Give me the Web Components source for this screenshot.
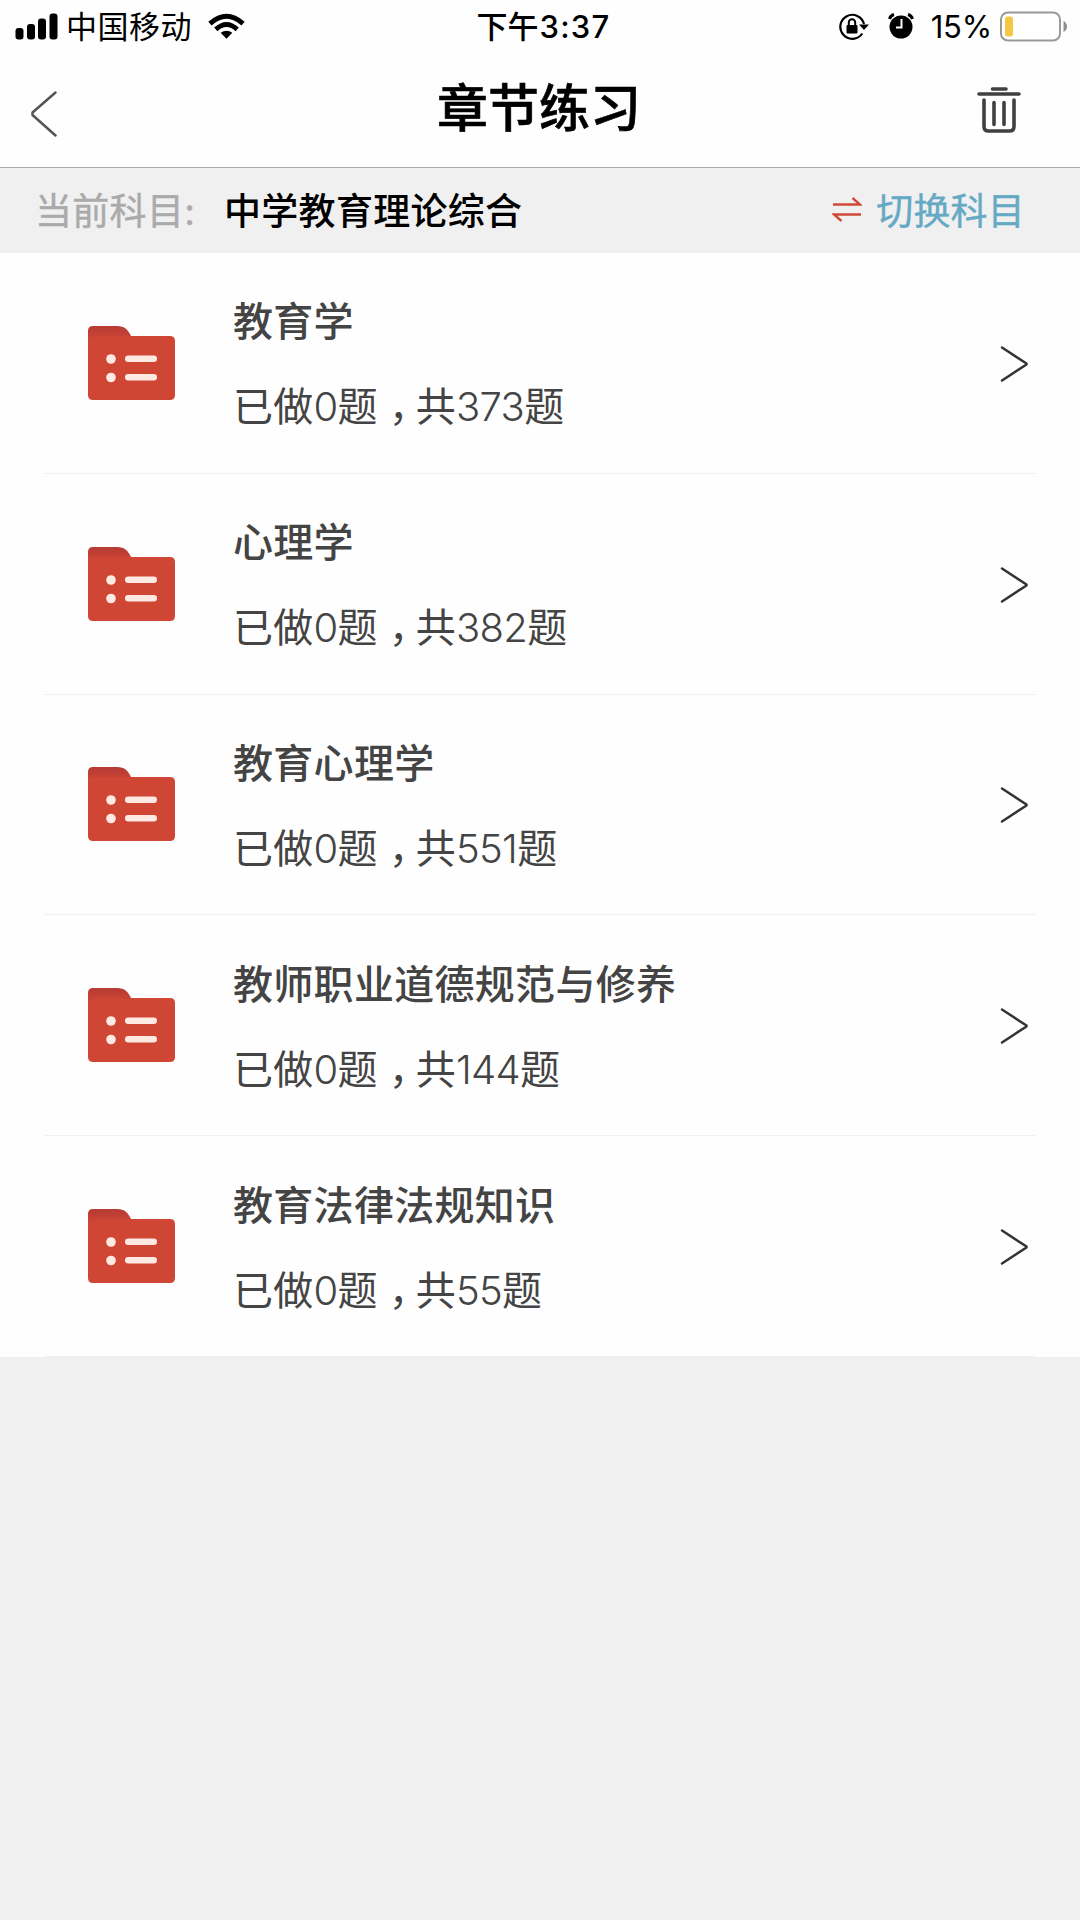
<!DOCTYPE html>
<html lang="zh-CN">
<head>
<meta charset="utf-8">
<title>章节练习</title>
<style>
  body {
    margin: 0;
    background: #f0f0f0;
    font-family: Inter, "Noto Sans CJK SC", sans-serif;
    color: #000;
  }
</style>
</head>
<body>
<practice-page>
  <status-bar slot="top" carrier="中国移动" period="下午" time="3:37" battery="15%"></status-bar>
  <nav-header slot="top">章节练习</nav-header>
  <subject-bar slot="top" label="当前科目:" action="切换科目">中学教育理论综合</subject-bar>
  <chapter-row done="0" total="373">教育学</chapter-row>
  <chapter-row done="0" total="382">心理学</chapter-row>
  <chapter-row done="0" total="551">教育心理学</chapter-row>
  <chapter-row done="0" total="144">教师职业道德规范与修养</chapter-row>
  <chapter-row done="0" total="55">教育法律法规知识</chapter-row>
</practice-page>

<script>
class PracticePage extends HTMLElement {
  constructor() {
    super();
    this.attachShadow({ mode: 'open' }).innerHTML = `
      <style>
        :host { display: block; width: 1080px; min-height: 1920px; }
        .list { background: #fefefe; }
      </style>
      <slot name="top"></slot>
      <div class="list"><slot></slot></div>
    `;
  }
}

class StatusBar extends HTMLElement {
  constructor() {
    super();
    this.attachShadow({ mode: 'open' });
  }

  connectedCallback() {
    this.shadowRoot.innerHTML = `
      <style>
        :host {
          display: grid;
          grid-template-columns: 1fr auto 1fr;
          align-items: center;
          box-sizing: border-box;
          height: 54px;
          padding: 0 13px 2px 15px;
          background: #fefefe;
          font-size: 31px;
          line-height: 40px;
        }
        svg { display: block; flex: none; }
        .left, .right, .clock { display: flex; align-items: center; }
        .right { justify-content: flex-end; }
        .carrier { margin: 0 16px 0 8px; padding-top: 2px; letter-spacing: 0.5px; }
        .clock { margin-left: 5px; padding-top: 2px; font-weight: 500; }
        .time { margin-left: 1px; letter-spacing: 1.2px; font-size: 31px; }
        .lock { margin-right: 19px; }
        .alarm { margin-right: 17px; }
        .pct { margin-right: 8px; padding-top: 2px; letter-spacing: -0.2px; }
      </style>
      <div class="left">
        <svg width="43" height="27" viewBox="0 0 43 27">
          <rect x="0.5" y="15" width="8" height="11.5" rx="3"/>
          <rect x="12" y="11" width="8" height="15.5" rx="3"/>
          <rect x="23" y="5.500" width="8" height="21" rx="3"/>
          <rect x="34.500" y="0.500" width="8" height="26" rx="3"/>
        </svg>
        <span class="carrier">${this.getAttribute('carrier')}</span>
        <svg width="37" height="27" viewBox="0 0 38 27">
          <g fill="none" stroke="#000" stroke-width="5">
            <path d="M2 10.500Q19 -4.500 36 10.500"/>
            <path d="M8 16.500Q19 6.500 30 16.500"/>
          </g>
          <path d="M13 20Q19 15.500 25 20L19 26Z"/>
        </svg>
      </div>
      <div class="clock"><span>${this.getAttribute('period')}</span><span class="time">${this.getAttribute('time')}</span></div>
      <div class="right">
        <svg class="lock" width="30" height="27" viewBox="0 0 30 27">
          <path d="M23.300 20.500A12 12 0 1 1 25 11" fill="none" stroke="#000" stroke-width="2.200"/>
          <path d="M20 11.500H30L25 17Z"/>
          <rect x="7.500" y="12" width="11" height="8.500" rx="1"/>
          <path d="M9.800 13V9.500a3.200 3.200 0 0 1 6.400 0V13" fill="none" stroke="#000" stroke-width="2"/>
        </svg>
        <svg class="alarm" width="26" height="26" viewBox="0 0 26 26">
          <circle cx="13" cy="14" r="11.500"/>
          <path d="M1.500 6Q2.500 2.500 6 1.500M24.500 6Q23.500 2.500 20 1.500" fill="none" stroke="#000" stroke-width="3"/>
          <path d="M13.500 6V14.500H8" fill="none" stroke="#fff" stroke-width="2"/>
        </svg>
        <span class="pct">${this.getAttribute('battery')}</span>
        <svg width="67" height="31" viewBox="0 0 67 31">
          <rect x="1" y="1.500" width="59" height="28" rx="7" fill="#fff" stroke="#999" stroke-width="2"/>
          <rect x="5" y="5.500" width="8" height="20" rx="2.500" fill="#f3c944"/>
          <path d="M63.500 10Q67 12 67 15.500T63.500 21Z" fill="#8e8e8e"/>
        </svg>
      </div>
    `;
  }
}

class NavHeader extends HTMLElement {
  constructor() {
    super();
    this.attachShadow({ mode: 'open' }).innerHTML = `
      <style>
        :host {
          display: flex;
          align-items: center;
          box-sizing: border-box;
          height: 114px;
          padding: 0 59px 0 30px;
          border-bottom: 1px solid #aaa;
          background: #fefefe;
        }
        svg { display: block; flex: none; }
        .back { margin-top: 6px; }
        .title {
          flex: 1;
          padding: 0 0 4px 43px;
          text-align: center;
          font-size: 51px;
          line-height: 60px;
          font-weight: 500;
          -webkit-text-stroke: 0.6px #000;
        }
        .trash { margin-bottom: 2px; }
      </style>
      <svg class="back" width="28" height="46" viewBox="0 0 28 46">
        <path d="M25.500 1.500L2.500 21.500V24L25.500 44.500" fill="none" stroke="#555" stroke-width="2.500" stroke-linecap="round" stroke-linejoin="round"/>
      </svg>
      <div class="title"><slot></slot></div>
      <svg class="trash" width="44" height="48" viewBox="0 0 44 48">
        <g fill="none" stroke="#404040" stroke-width="3.600" stroke-linecap="round">
          <path d="M15.500 3H29M2 8H42"/>
          <path d="M7 14V40.500Q7 45 11.500 45H32.500Q37 45 37 40.500V14"/>
          <path d="M17 16.500V38.500M27 16.500V38.500"/>
        </g>
      </svg>
    `;
  }
}

class SubjectBar extends HTMLElement {
  constructor() {
    super();
    this.attachShadow({ mode: 'open' });
  }

  connectedCallback() {
    this.shadowRoot.innerHTML = `
      <style>
        :host {
          display: flex;
          align-items: center;
          box-sizing: border-box;
          height: 85px;
          padding: 2px 55px 0 35px;
          font-size: 37px;
          line-height: 50px;
        }
        .label { width: 189px; color: #aaa; letter-spacing: 0.3px; -webkit-text-stroke: 0.4px #aaa; }
        .name { flex: 1; font-weight: 500; letter-spacing: 0.3px; }
        .switch { display: flex; align-items: center; gap: 14px; color: #65a9c4; letter-spacing: 0.2px; -webkit-text-stroke: 0.4px #65a9c4; }
        svg { display: block; margin-bottom: 5px; }
      </style>
      <span class="label">${this.getAttribute('label')}</span>
      <span class="name"><slot></slot></span>
      <span class="switch">
        <svg width="30" height="26" viewBox="0 0 30 26">
          <path d="M1 8.500H28L20.500 2M29 18.500H2L9.500 25" fill="none" stroke="#cf4b38" stroke-width="2.400"/>
        </svg>
        <span>${this.getAttribute('action')}</span>
      </span>
    `;
  }
}

class FolderIcon extends HTMLElement {
  constructor() {
    super();
    this.attachShadow({ mode: 'open' }).innerHTML = `
      <style>
        :host { display: block; width: 87px; height: 74px; }
        svg { display: block; }
      </style>
      <svg width="87" height="74" viewBox="0 0 87 74">
        <defs>
          <linearGradient id="tab" x1="0" y1="0" x2="0" y2="1">
            <stop offset="0.100" stop-color="#b93c34"/>
            <stop offset="0.650" stop-color="#cf4634"/>
          </linearGradient>
        </defs>
        <path d="M0 22V5Q0 0 5 0H29C37 0 40 4 43 10V22Z" fill="url(#tab)"/>
        <path d="M0 15Q2 10 8 10H82Q87 10 87 15V69Q87 74 82 74H5Q0 74 0 69Z" fill="#cf4634"/>
        <g fill="#ffe9e3">
          <circle cx="23" cy="33" r="4.800"/>
          <circle cx="23" cy="51.500" r="4.800"/>
          <rect x="37" y="29.500" width="32" height="6.500" rx="3.200"/>
          <rect x="37" y="48" width="32" height="6.500" rx="3.200"/>
        </g>
      </svg>
    `;
  }
}

class ChapterRow extends HTMLElement {
  constructor() {
    super();
    this.attachShadow({ mode: 'open' });
  }

  connectedCallback() {
    this.shadowRoot.innerHTML = `
      <style>
        :host {
          display: flex;
          align-items: center;
          box-sizing: border-box;
          height: 220.800px;
          margin: 0 44px;
          padding: 0 7px 0 44px;
          border-bottom: 1px solid #f1f1f1;
          color: #444;
        }
        .text { flex: 1; margin-left: 58px; padding-top: 4px; }
        .name {
          font-size: 40px;
          line-height: 56px;
          font-weight: 500;
          letter-spacing: 0.3px;
        }
        .count {
          margin-top: 29px;
          font-size: 40px;
          line-height: 56px;
          letter-spacing: 0.2px;
        }
        .num { font-weight: 350; letter-spacing: -0.700px; }
        /* half-width comma, centred in a full-width cell */
        .comma { margin: 0 7px 0 11px; font-feature-settings: "halt"; }
        svg { display: block; margin-top: 2px; }
      </style>
      <folder-icon></folder-icon>
      <div class="text">
        <div class="name"><slot></slot></div>
        <div class="count">已做<span class="num">${this.getAttribute('done')}</span>题<span class="comma">，</span>共<span class="num">${this.getAttribute('total')}</span>题</div>
      </div>
      <svg width="29" height="36" viewBox="0 0 29 36">
        <path d="M2 1.500L26.500 17.500V18.500L2 34.500" fill="none" stroke="#333" stroke-width="2.500" stroke-linecap="round" stroke-linejoin="round"/>
      </svg>
    `;
  }
}

customElements.define('practice-page', PracticePage);
customElements.define('status-bar', StatusBar);
customElements.define('nav-header', NavHeader);
customElements.define('subject-bar', SubjectBar);
customElements.define('folder-icon', FolderIcon);
customElements.define('chapter-row', ChapterRow);
</script>
</body>
</html>
